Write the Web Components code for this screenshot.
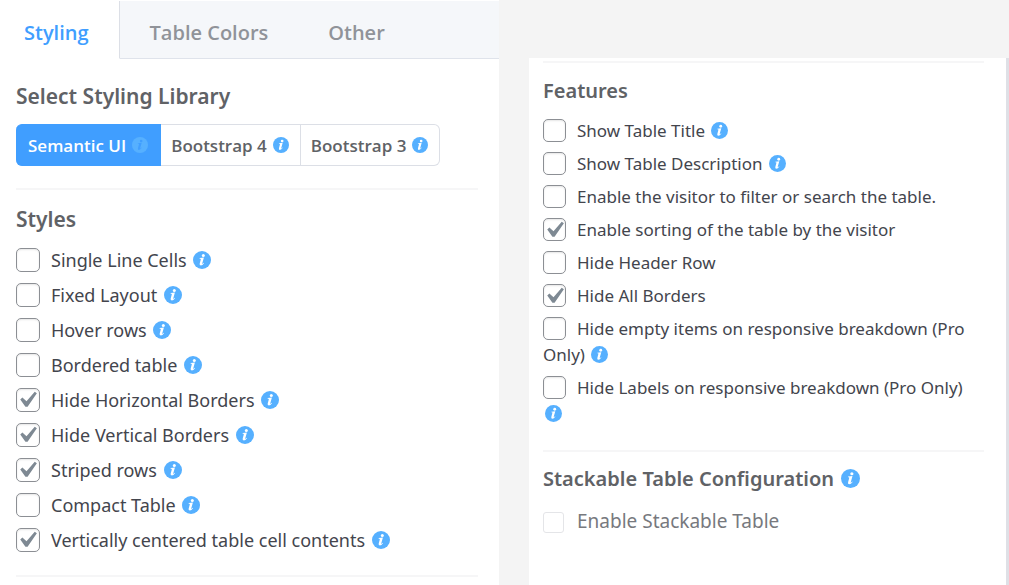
<!DOCTYPE html>
<html lang="en">
<head>
<meta charset="utf-8">
<meta name="viewport" content="width=device-width, initial-scale=1">
<title>Table design settings</title>
<style>
  body { margin: 0; background: #f4f4f4; font-family: "Noto Sans", "Open Sans", sans-serif; color: #43454d; }
</style>
</head>
<body>
<settings-page>
  <settings-panel slot="main">
    <tab-bar slot="top" tabs="Styling,Table Colors,Other"></tab-bar>
    <settings-section heading="Select Styling Library" class="first">
      <library-picker></library-picker>
    </settings-section>
    <settings-section heading="Styles" class="list">
      <option-check info>Single Line Cells</option-check>
      <option-check info>Fixed Layout</option-check>
      <option-check info>Hover rows</option-check>
      <option-check info>Bordered table</option-check>
      <option-check info checked>Hide Horizontal Borders</option-check>
      <option-check info checked>Hide Vertical Borders</option-check>
      <option-check info checked>Striped rows</option-check>
      <option-check info>Compact Table</option-check>
      <option-check info checked>Vertically centered table cell contents</option-check>
    </settings-section>
  </settings-panel>
  <settings-panel slot="side" compact>
    <settings-section heading="Features" class="list">
      <option-check info>Show Table Title</option-check>
      <option-check info>Show Table Description</option-check>
      <option-check>Enable the visitor to filter or search the table.</option-check>
      <option-check checked>Enable sorting of the table by the visitor</option-check>
      <option-check>Hide Header Row</option-check>
      <option-check checked>Hide All Borders</option-check>
      <option-check info>Hide empty items on responsive breakdown (Pro Only)</option-check>
      <option-check info>Hide Labels on responsive breakdown (Pro Only)</option-check>
    </settings-section>
    <settings-section heading="Stackable Table Configuration" info class="last">
      <option-check disabled>Enable Stackable Table</option-check>
    </settings-section>
  </settings-panel>
</settings-page>

<script>
const define = (name, render) => customElements.define(name, class extends HTMLElement {
  connectedCallback() {
    if (!this.shadowRoot) this.attachShadow({ mode: "open" }).innerHTML = render(this);
  }
});

define("info-icon", () => `
  <style>
    :host { display: inline-block; width: var(--icon, 18px); height: var(--icon, 18px); vertical-align: middle; color: #56b0ff; }
    svg { display: block; width: 100%; height: 100%; }
    .mark { fill: var(--mark, #fff); }
  </style>
  <svg viewBox="0 0 18 18" aria-hidden="true">
    <circle cx="9" cy="9" r="9" fill="currentColor"/>
    <circle class="mark" cx="10.3" cy="4.5" r="1.5"/>
    <path class="mark" d="M6.7 7.1 L10.9 6.6 L9.3 12.3 Q9.1 13.1 9.4 13 Q9.8 12.8 10.6 11.8 L11 12.2 Q9.4 14.5 7.8 14.5 Q6.2 14.3 6.7 12.6 L7.8 8.5 Q8 7.7 7.4 7.7 L6.6 7.7 Z"/>
  </svg>`);

define("tab-bar", el => `
  <style>
    :host { display: block; }
    div { display: flex; height: 58px; border-top: 1px solid #fff; background: #f5f7fa; }
    button { box-sizing: border-box; padding: 6px 30px 0; border: 0; border-bottom: 1px solid #dfe3eb; background: none;
             font: 600 20px "Open Sans", sans-serif; color: #909399; }
    button[aria-selected="true"] { padding-left: 24px; background: #fff; color: #409eff;
             border-right: 1px solid #dcdfe6; border-bottom-color: #fff; }
    i { flex: 1; border-bottom: 1px solid #dfe3eb; }
  </style>
  <div role="tablist">${el.getAttribute("tabs").split(",").map((t, n) =>
    `<button type="button" role="tab" aria-selected="${n === 0}">${t}</button>`).join("")}<i></i></div>`);

define("library-picker", () => `
  <style>
    :host { display: flex; }
    button { display: flex; align-items: center; gap: 6px; height: 42px; padding: 0 11px 0 10px; margin: 0;
             border: 1px solid #dcdfe6; border-left: 0; background: #fff; color: #606266; --icon: 16px;
             font: 600 17px "Open Sans", sans-serif; }
    button[aria-pressed="true"] { padding: 0 12px; border-color: #409eff; border-radius: 6px 0 0 6px;
             background: #409eff; color: #fff; --mark: #409eff; }
    button:last-child { border-radius: 0 6px 6px 0; }
  </style>
  <button type="button" aria-pressed="true">Semantic UI<info-icon></info-icon></button>
  <button type="button" aria-pressed="false">Bootstrap 4<info-icon></info-icon></button>
  <button type="button" aria-pressed="false">Bootstrap 3<info-icon></info-icon></button>`);

define("option-check", el => {
  const has = n => el.hasAttribute(n);
  return `
  <style>
    :host { display: block; font-size: var(--label, 18px); line-height: var(--line, 35px); }
    :host([disabled]) { color: #77797e; font-size: 19px; --box: 21px; }
    input { appearance: none; box-sizing: border-box; width: var(--box, 24px); height: var(--box, 24px); margin: 0 11px 0 0;
            border: 1px solid #8c8f94; border-radius: 5px; background: #fff no-repeat -6px -5px / 32px;
            box-shadow: inset 0 1px 2px #0000001a; vertical-align: -5px; }
    input:checked { background-image: url("data:image/svg+xml,%3Csvg xmlns='http://www.w3.org/2000/svg' viewBox='0 0 20 20'%3E%3Cpath d='M14.83 4.89l1.34.94-5.81 8.38H9.02L5.78 9.67l1.34-1.25 2.57 2.4z' fill='%237e8993'/%3E%3C/svg%3E"); }
    input:disabled { margin-right: 13px; border-color: #e4e5e8; border-radius: 3px; box-shadow: none; }
    info-icon { margin: 0 2px 4px; }
  </style>
  <label><input type="checkbox"${has("checked") ? " checked" : ""}${has("disabled") ? " disabled" : ""}><slot></slot>${has("info") ? " <info-icon></info-icon>" : ""}</label>`;
});

define("settings-section", el => `
  <style>
    :host { display: block; border-bottom: 2px solid #f6f6f7; padding: var(--pad-top, 14px) 0 22px; }
    :host(.first) { padding-top: 22px; }
    :host(.list) { padding-bottom: var(--list-end, 17px); }
    :host(.last) { border-bottom: 0; padding-top: 12px; --head-gap: 14px; }
    h2 { margin: 0 0 var(--head-gap, 9px); font: 600 var(--head, 21px)/30px "Noto Sans", sans-serif; color: #606266; --icon: 19px; }
    :host(.first) h2 { margin-bottom: 13px; }
    info-icon { margin: 0 2px 4px; }
    .items { display: grid; gap: var(--gap, 0px); }
  </style>
  <h2>${el.getAttribute("heading")}${el.hasAttribute("info") ? " <info-icon></info-icon>" : ""}</h2>
  <div class="items"><slot></slot></div>`);

define("settings-panel", () => `
  <style>
    :host { display: block; background: #fff; }
    .body { padding: 0 21px 0 16px; }
    :host([compact]) { border-right: 3px solid #dfe0e6; --label: 17px; --line: 26px; --gap: 7px;
                       --box: 23px; --icon: 17px; --head: 20px; --pad-top: 13px; --head-gap: 12px; --list-end: 23px; }
    :host([compact]) .body { padding: 3px 22px 0 14px; }
    :host([compact]) .body::before { content: ""; display: block; height: 2px; background: #f6f6f7; }
  </style>
  <slot name="top"></slot>
  <div class="body"><slot></slot></div>`);

define("settings-page", () => `
  <style>
    :host { display: grid; grid-template-columns: 499fr 480fr; gap: 30px; min-height: 100vh; }
    aside { display: grid; padding-top: 58px; }
    main { display: grid; }
  </style>
  <main><slot name="main"></slot></main>
  <aside><slot name="side"></slot></aside>`);
</script>
</body>
</html>
